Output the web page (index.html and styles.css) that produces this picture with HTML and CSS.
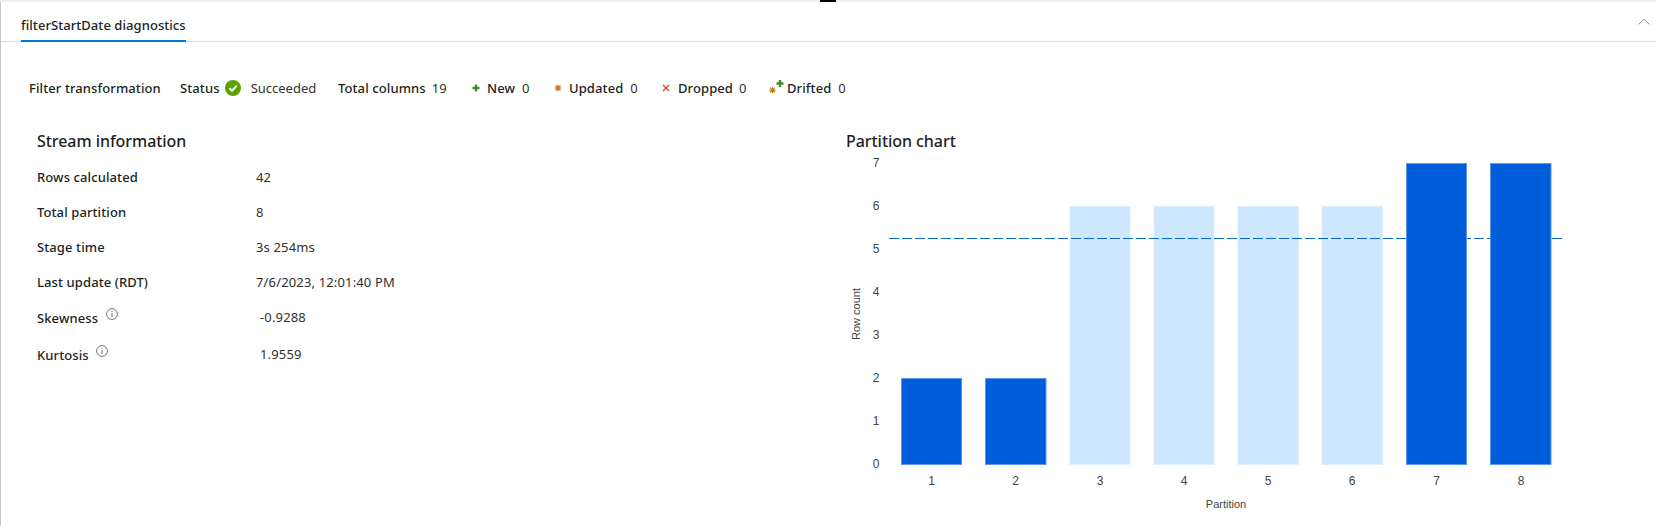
FILE: index.html
```html
<!DOCTYPE html>
<html lang="en">
<head>
<meta charset="utf-8">
<title>filterStartDate diagnostics</title>
<link rel="stylesheet" href="styles.css">
</head>
<body>
<div class="topstrip"><span class="topmark"></span></div>
<div class="panel">
  <header class="tabbar">
    <div class="tab">filterStartDate diagnostics</div>
    <svg class="chevron" width="12" height="7" viewBox="0 0 12 7"><path d="M0.5 6.5 L6 1 L11.5 6.5" fill="none" stroke="#999" stroke-width="1"/></svg>
  </header>
  <div class="summary">
    <span class="label title-label">Filter transformation</span>
    <span class="group status">
      <span class="label">Status</span>
      <svg class="status-icon" width="16" height="16" viewBox="0 0 16 16"><circle cx="8" cy="8" r="8" fill="#57a300"/><path d="M4.4 8.2 L7 10.8 L11.7 5.6" fill="none" stroke="#fff" stroke-width="2"/></svg>
      <span class="value succeeded">Succeeded</span>
    </span>
    <span class="group columns"><span class="label">Total columns</span><span class="value">19</span></span>
    <span class="group new">
      <svg width="8" height="8" viewBox="0 0 8 8"><path d="M4 0.5 V7.5 M0.5 4 H7.5" stroke="#3b8a2e" stroke-width="2.4"/></svg>
      <span class="label">New</span><span class="value">0</span>
    </span>
    <span class="group updated">
      <svg width="8" height="8" viewBox="0 0 8 8"><path d="M4 0.5 V7.5 M0.5 4 H7.5 M1.5 1.5 L6.5 6.5 M6.5 1.5 L1.5 6.5" stroke="#c47a1e" stroke-width="1.1"/></svg>
      <span class="label">Updated</span><span class="value">0</span>
    </span>
    <span class="group dropped">
      <svg width="8" height="8" viewBox="0 0 8 8"><path d="M1 1 L7 7 M7 1 L1 7" stroke="#d83b1c" stroke-width="1.1"/></svg>
      <span class="label">Dropped</span><span class="value">0</span>
    </span>
    <span class="group drifted">
      <svg width="17" height="16" viewBox="0 0 17 16"><path d="M4.5 8 V14.5 M1.2 11.2 H7.8 M2.2 8.9 L6.8 13.5 M6.8 8.9 L2.2 13.5" stroke="#c47a1e" stroke-width="1.1"/><path d="M12 1 V8 M8.5 4.5 H15.5" stroke="#3b8a2e" stroke-width="2.4"/></svg>
      <span class="label">Drifted</span><span class="value">0</span>
    </span>
  </div>
  <main class="content">
    <section class="stream">
      <h2 class="heading">Stream information</h2>
      <dl class="facts">
        <div class="fact"><dt>Rows calculated</dt><dd>42</dd></div>
        <div class="fact"><dt>Total partition</dt><dd>8</dd></div>
        <div class="fact"><dt>Stage time</dt><dd>3s 254ms</dd></div>
        <div class="fact"><dt>Last update (RDT)</dt><dd>7/6/2023, 12:01:40 PM</dd></div>
        <div class="fact fact-skew"><dt>Skewness <svg class="info" width="12" height="12" viewBox="0 0 12 12"><circle cx="6" cy="6" r="5.4" fill="none" stroke="#666" stroke-width="0.9"/><path d="M6 5 V9 M6 3 V4" stroke="#666" stroke-width="1"/></svg></dt><dd class="indent">-0.9288</dd></div>
        <div class="fact fact-kurt"><dt>Kurtosis <svg class="info" width="12" height="12" viewBox="0 0 12 12"><circle cx="6" cy="6" r="5.4" fill="none" stroke="#666" stroke-width="0.9"/><path d="M6 5 V9 M6 3 V4" stroke="#666" stroke-width="1"/></svg></dt><dd class="indent">1.9559</dd></div>
      </dl>
    </section>
    <section class="partition">
      <h2 class="heading">Partition chart</h2>
      <svg class="chart" width="780" height="365" viewBox="0 0 780 365">
        <g class="ticks">
          <text x="30" y="10">7</text><text x="30" y="53">6</text><text x="30" y="96">5</text><text x="30" y="139">4</text><text x="30" y="182">3</text><text x="30" y="225">2</text><text x="30" y="268">1</text><text x="30" y="311">0</text>
        </g>
        <text class="axis" transform="translate(14 157) rotate(-90)">Row count</text>
        <g>
          <rect class="light" x="224" y="49.5" width="60" height="258"/>
          <rect class="light" x="308" y="49.5" width="60" height="258"/>
          <rect class="light" x="392" y="49.5" width="60.5" height="258"/>
          <rect class="light" x="476" y="49.5" width="60.5" height="258"/>
        </g>
        <line class="avg" x1="43" y1="81.5" x2="718" y2="81.5"/>
        <g>
          <rect class="dark" x="55.5" y="221.5" width="60" height="86"/>
          <rect class="dark" x="139.5" y="221.5" width="60.5" height="86"/>
          <rect class="dark" x="560.5" y="6.5" width="60" height="301"/>
          <rect class="dark" x="644.5" y="6.5" width="60.5" height="301"/>
        </g>
        <g class="ticks">
          <text x="85.5" y="328">1</text><text x="169.5" y="328">2</text><text x="254" y="328">3</text><text x="338" y="328">4</text><text x="422" y="328">5</text><text x="506" y="328">6</text><text x="590.5" y="328">7</text><text x="675" y="328">8</text>
        </g>
        <text class="axis" x="380" y="351">Partition</text>
      </svg>
    </section>
  </main>
</div>
</body>
</html>
```
FILE: styles.css
```css
* { box-sizing: border-box; }
html, body { margin: 0; height: 100%; overflow: hidden; background: #fff; }
body {
  font-family: "Noto Sans", "Open Sans", sans-serif;
  font-size: 13px;
  color: #201f1e;
}
.topstrip {
  height: 2px;
  background: #eeeeee;
  display: flex;
  justify-content: center;
}
.topmark { width: 16px; height: 2px; background: #000; }
.panel {
  height: 524px;
  border-left: 1px solid #c8c8c8;
}
.tabbar {
  height: 40px;
  border-bottom: 1px solid #dcdcdc;
  padding: 0 20px;
  display: flex;
  justify-content: space-between;
  align-items: flex-start;
}
.tab {
  height: 40px;
  padding-top: 13px;
  line-height: 20px;
  border-bottom: 2px solid #0078d4;
  font-weight: 500;
  font-size: 13px;
  letter-spacing: 0.06px;
}
.chevron { margin-top: 16px; margin-right: -14px; }
.summary {
  display: flex;
  align-items: center;
  height: 24px;
  margin-top: 34px;
  padding-left: 28px;
}
.label { font-weight: 500; letter-spacing: 0.1px; }
.value { color: #323130; letter-spacing: 0; }
.group { display: inline-flex; align-items: center; }
.title-label { width: 151px; }
.status { width: 158px; }
.status-icon { margin: 0 10px 0 5px; }
.columns { width: 134px; gap: 6px; }
.new { width: 82px; }
.new svg { margin-right: 7px; }
.new .value { margin-left: 7px; }
.updated { width: 108px; }
.updated svg { margin-right: 7px; }
.updated .value { margin-left: 7px; }
.dropped { width: 106px; }
.dropped svg { margin-right: 8px; }
.dropped .value { margin-left: 6px; }
.drifted svg { margin-right: 2px; margin-top: -2px; }
.drifted .value { margin-left: 7px; }
.content {
  display: flex;
  margin-top: 30px;
}
.stream { flex: none; width: 845px; padding-left: 36px; }
.heading {
  margin: 0;
  font-size: 16px;
  font-weight: 500;
  line-height: 22px;
  letter-spacing: -0.05px;
}
.facts { margin: 7px 0 0; }
.fact {
  display: flex;
  align-items: center;
  height: 35px;
}
.fact-skew { height: 36px; }
.fact-kurt { height: 38px; }
.fact dt { width: 219px; font-weight: 500; letter-spacing: 0.1px; }
.fact dd { margin: 0; color: #323130; letter-spacing: 0.15px; }
.fact dd.indent { padding-left: 4px; }
.info { vertical-align: 3px; margin-left: 4px; }
.partition { flex: none; width: 780px; }
.chart { display: block; margin-top: 5px; }
.ticks text {
  font-family: "Liberation Sans", Arial, sans-serif;
  font-size: 12px;
  fill: #444;
  text-anchor: middle;
}
.axis {
  font-family: "Liberation Sans", Arial, sans-serif;
  font-size: 11px;
  fill: #444;
  text-anchor: middle;
}
.dark { fill: #005ddb; stroke: #5d97e8; stroke-width: 1; }
.light { fill: #cce7ff; stroke: #dcefff; stroke-width: 1; }
.avg { stroke: #0a66e0; stroke-width: 1; stroke-dasharray: 10 3; }
```
